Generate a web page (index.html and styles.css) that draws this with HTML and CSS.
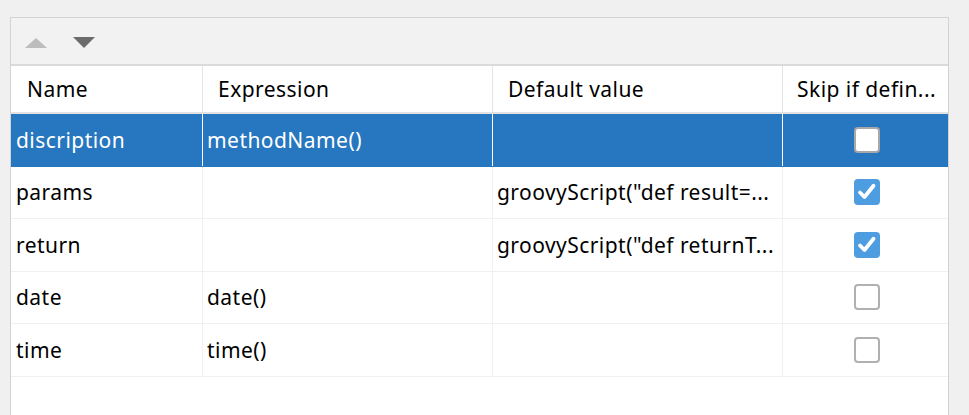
FILE: index.html
```html
<!DOCTYPE html>
<html>
<head>
<meta charset="utf-8">
<link rel="stylesheet" href="styles.css">
</head>
<body>
<div class="panel">
  <div class="toolbar">
    <span class="arrow up"></span>
    <span class="arrow down"></span>
  </div>
  <div class="table">
    <div class="row head">
      <div class="cell c1">Name</div>
      <div class="cell c2">Expression</div>
      <div class="cell c3">Default value</div>
      <div class="cell c4"><span class="htext">Skip if defin...</span></div>
    </div>
    <div class="row sel">
      <div class="cell c1">discription</div>
      <div class="cell c2">methodName()</div>
      <div class="cell c3"></div>
      <div class="cell c4"><span class="cb"></span></div>
    </div>
    <div class="row">
      <div class="cell c1">params</div>
      <div class="cell c2"></div>
      <div class="cell c3">groovyScript("def result=...</div>
      <div class="cell c4"><span class="cb on"><svg viewBox="0 0 26 26" width="26" height="26"><path d="M6 13.5 L10.5 18 L19.5 6.8" fill="none" stroke="#fff" stroke-width="3.8" stroke-linecap="round" stroke-linejoin="round"/></svg></span></div>
    </div>
    <div class="row">
      <div class="cell c1">return</div>
      <div class="cell c2"></div>
      <div class="cell c3">groovyScript("def returnT...</div>
      <div class="cell c4"><span class="cb on"><svg viewBox="0 0 26 26" width="26" height="26"><path d="M6 13.5 L10.5 18 L19.5 6.8" fill="none" stroke="#fff" stroke-width="3.8" stroke-linecap="round" stroke-linejoin="round"/></svg></span></div>
    </div>
    <div class="row">
      <div class="cell c1">date</div>
      <div class="cell c2">date()</div>
      <div class="cell c3"></div>
      <div class="cell c4"><span class="cb"></span></div>
    </div>
    <div class="row">
      <div class="cell c1">time</div>
      <div class="cell c2">time()</div>
      <div class="cell c3"></div>
      <div class="cell c4"><span class="cb"></span></div>
    </div>
  </div>
</div>
</body>
</html>
```
FILE: styles.css
```css
html, body {
  margin: 0;
  padding: 0;
  background: #f0f0f0;
  height: 100%;
  overflow: hidden;
}
body {
  padding: 17px 20px 0 10px;
  font-family: "Noto Sans", "Open Sans", sans-serif;
  font-size: 21px;
  letter-spacing: 0.45px;
  color: #000;
}
.panel {
  width: 937px;
  height: 400px;
  border: 1px solid #d3d3d3;
  border-bottom: none;
  background: #fff;
  overflow: hidden;
}
.toolbar {
  height: 46px;
  background: #f2f2f2;
  border-bottom: 2px solid #dadada;
  display: flex;
  align-items: center;
  padding-left: 14px;
  gap: 26px;
}
.arrow {
  width: 0;
  height: 0;
  border-left: 11px solid transparent;
  border-right: 11px solid transparent;
}
.arrow.up {
  border-bottom: 10px solid #bdbdbd;
  margin-top: 3px;
}
.arrow.down {
  border-top: 11px solid #6c6c6c;
  margin-top: 2px;
}
.table {
  display: flex;
  flex-direction: column;
}
.row {
  display: grid;
  grid-template-columns: 192px 290px 290px 165px;
  height: 51.5px;
  border-bottom: 1px solid #f0f0f0;
}
.row.head {
  height: 46px;
  border-bottom: 2px solid #e2e2e2;
}
.cell {
  display: flex;
  align-items: center;
  padding-left: 5px;
  border-right: 1px solid #f0f0f0;
  white-space: nowrap;
  overflow: hidden;
}
.cell.c2, .cell.c3 { padding-left: 4px; }
.head .cell {
  padding-left: 16px;
  border-right-color: #e4e4e4;
}
.head .cell.c2, .head .cell.c3 { padding-left: 15px; }
.cell.c4 {
  border-right: none;
  justify-content: center;
  padding-left: 0;
}
.head .cell.c4 {
  justify-content: flex-start;
  padding-left: 14px;
}
.htext {
  display: block;
  white-space: nowrap;
}
.row.sel {
  background: #2776c0;
  color: #fff;
  border-bottom-color: #2776c0;
}
.row.sel .cell {
  border-right-color: #ffffff;
}
.row.sel .cell.c4 { border-right: none; }
.cb {
  width: 26px;
  height: 26px;
  box-sizing: border-box;
  border: 2px solid #b0b0b0;
  border-radius: 4px;
  background: #fff;
  display: block;
  margin-left: 3px;
}
.row.sel .cb { border-color: #a8a8a8; }
.cb.on {
  background: #4d9de0;
  border: none;
}
.cb svg { display: block; }
```
